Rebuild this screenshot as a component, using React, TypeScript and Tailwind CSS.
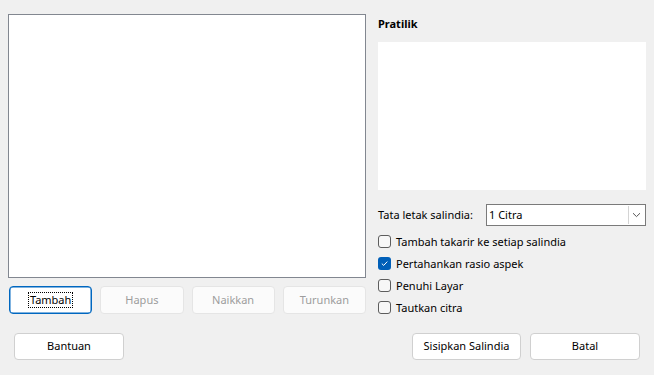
import React from "react";

const font = { fontFamily: '"Segoe UI", "Noto Sans", "Open Sans", sans-serif' };

function Check({ checked, label }: { checked?: boolean; label: string }) {
  return (
    <div className="flex items-center h-[22px] shrink-0">
      {checked ? (
        <div className="w-[13px] h-[13px] rounded-[3px] bg-[#005fb8] flex items-center justify-center">
          <svg width="9" height="9" viewBox="0 0 9 9">
            <path d="M1.8 4.6 L3.7 6.4 L7.3 2.6" stroke="white" strokeWidth="1" fill="none" />
          </svg>
        </div>
      ) : (
        <div className="w-[13px] h-[13px] rounded-[3px] border border-[#5d5d5d] bg-[#f7f7f7]" />
      )}
      <span className="ml-[5px] text-[11px] text-black leading-none">{label}</span>
    </div>
  );
}

function Btn({ label, disabled, focus, w }: { label: string; disabled?: boolean; focus?: boolean; w?: string }) {
  return (
    <div
      className={`${w ?? ""} h-full rounded-[4px] flex items-center justify-center text-[11px] ${
        focus
          ? "border border-[#0067c0] bg-white text-black shadow-[inset_0_0_0_0.5px_#0067c0]"
          : disabled
          ? "border border-[#e5e5e5] bg-[#fbfbfb] text-[#9d9d9d]"
          : "border border-[#d0d0d0] bg-white text-black"
      }`}
    >
      {focus ? (
        <span className="outline outline-1 outline-dotted outline-black px-[1px] leading-[14px]">{label}</span>
      ) : (
        <span>{label}</span>
      )}
    </div>
  );
}

export default function App() {
  return (
    <div className="w-[654px] h-[375px] bg-[#f0f0f0] pt-[14px] overflow-hidden" style={font}>
      <div className="flex h-[300px]">
        <div className="ml-[8px] w-[358px] flex flex-col">
          <div className="h-[264px] shrink-0 bg-white border border-[#828790]" />
          <div className="mt-[8px] h-[28px] shrink-0 grid grid-cols-4 gap-[8px] pl-[1px]">
            <Btn label="Tambah" focus />
            <Btn label="Hapus" disabled />
            <Btn label="Naikkan" disabled />
            <Btn label="Turunkan" disabled />
          </div>
        </div>
        <div className="ml-[12px] w-[268px] flex flex-col">
          <div className="h-[28px] shrink-0 flex items-center text-[11px] font-bold text-black pb-[8px]">Pratilik</div>
          <div className="h-[148px] shrink-0 bg-white" />
          <div className="mt-[14px] shrink-0 flex items-center h-[22px]">
            <span className="text-[11px] text-black w-[108px]">Tata letak salindia:</span>
            <div className="flex-1 h-[22px] bg-white border border-[#7a7a7a] flex items-center">
              <span className="flex-1 text-[11px] text-black pl-[2px]">1 Citra</span>
              <div className="w-[16px] h-[18px] mr-[1px] border-l border-[#d4d4d4] flex items-center justify-center">
                <svg width="9" height="6" viewBox="0 0 9 6">
                  <path d="M1 1.2 L4.5 4.6 L8 1.2" stroke="#555" strokeWidth="1" fill="none" />
                </svg>
              </div>
            </div>
          </div>
          <div className="mt-[4px] shrink-0 flex flex-col">
            <Check label="Tambah takarir ke setiap salindia" />
            <Check label="Pertahankan rasio aspek" checked />
            <Check label="Penuhi Layar" />
            <Check label="Tautkan citra" />
          </div>
        </div>
      </div>
      <div className="mt-[19px] h-[27px] flex px-[14px]">
        <Btn label="Bantuan" w="w-[110px]" />
        <div className="flex-1" />
        <div className="flex gap-[9px] h-full">
          <Btn label="Sisipkan Salindia" w="w-[109px]" />
          <Btn label="Batal" w="w-[110px]" />
        </div>
      </div>
    </div>
  );
}
